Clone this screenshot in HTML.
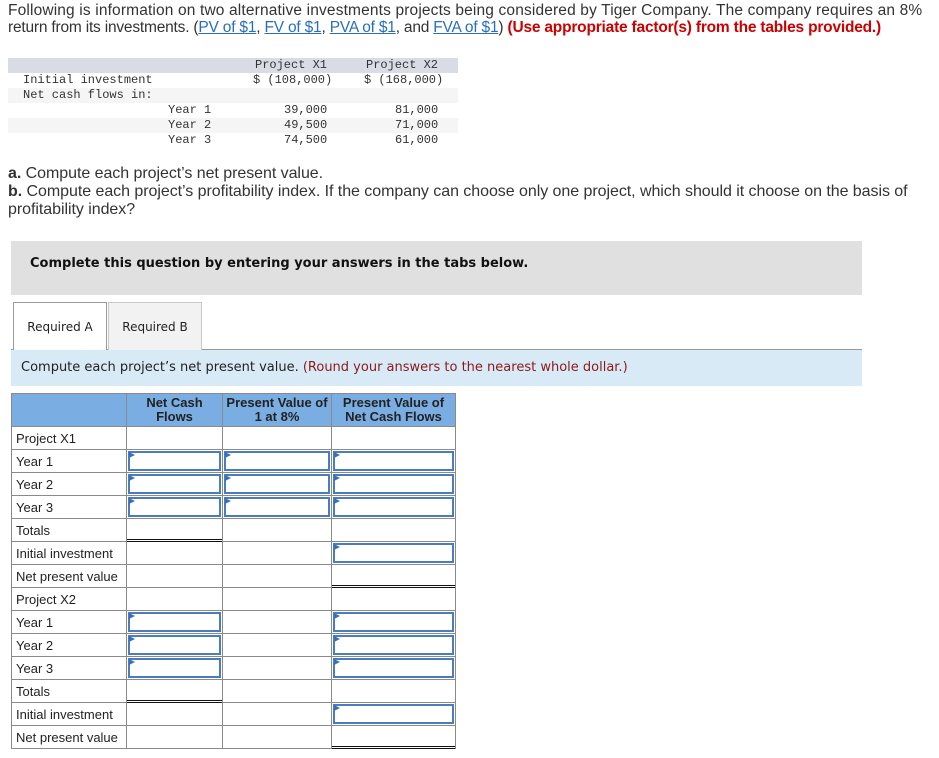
<!DOCTYPE html>
<html><head><meta charset="utf-8"><style>
body{margin:0;width:939px;height:758px;background:#fff;font-family:"Liberation Sans",sans-serif;color:#333;position:relative;overflow:hidden}
.a{position:absolute}
.p{font-size:15.5px;line-height:16px;left:8px;letter-spacing:0.15px;white-space:nowrap}
a{color:#2a6ebb;text-decoration:underline}
.red{color:#c00;font-weight:bold}
.mono{font-family:"Liberation Mono",monospace;font-size:12px;color:#333}
.dt div{position:absolute;white-space:pre}
table{border-collapse:collapse;position:absolute;left:11px;top:393px;table-layout:fixed}
td{border:1px solid #8a8a8a;height:22px;padding:0;font-size:13px;color:#222;position:relative}
td.l{padding-left:4px}
th{background:#7aaee3;border:1px solid #8a8a8a;height:32px;font-size:13px;font-weight:bold;color:#222;line-height:14px;padding:0}
.i{position:absolute;left:1px;top:1px;right:1px;bottom:1px;border:2px solid #4a7cbf}
.i:before{content:"";position:absolute;left:-1px;top:-1px;border-left:6px solid #3d6fb6;border-top:3px solid transparent;border-bottom:3px solid transparent}
.dbl:after{content:"";position:absolute;left:0;right:0;bottom:-1px;height:1px;border-top:1px solid #111;border-bottom:1px solid #111}
.q{font-size:16px;letter-spacing:-0.05px}
</style></head><body>
<div class="a p" style="top:3px">Following is information on two alternative investments projects being considered by Tiger Company. The company requires an 8%</div>
<div class="a p" style="top:20px;letter-spacing:-0.2px">return from its investments. (<a>PV of $1</a>, <a>FV of $1</a>, <a>PVA of $1</a>, and <a>FVA of $1</a>) <span class="red">(Use appropriate factor(s) from the tables provided.)</span></div>

<div class="a" style="left:8px;top:58px;width:450px;height:15px;background:#d9dce5"></div>
<div class="a" style="left:8px;top:88px;width:450px;height:15px;background:#f5f5f5"></div>
<div class="a" style="left:8px;top:118px;width:450px;height:15px;background:#f5f5f5"></div>
<div class="a mono dt" style="left:0;top:0">
<div style="left:23px;top:73px">Initial investment</div>
<div style="left:23px;top:88px">Net cash flows in:</div>
<div style="left:255px;top:58px">Project X1</div>
<div style="left:366px;top:58px">Project X2</div>
<div style="left:253px;top:73px">$ (108,000)</div>
<div style="left:364px;top:73px">$ (168,000)</div>
<div style="left:168px;top:103px">Year 1</div>
<div style="left:168px;top:118px">Year 2</div>
<div style="left:168px;top:133px">Year 3</div>
<div style="left:284px;top:103px">39,000</div>
<div style="left:284px;top:118px">49,500</div>
<div style="left:284px;top:133px">74,500</div>
<div style="left:395px;top:103px">81,000</div>
<div style="left:395px;top:118px">71,000</div>
<div style="left:395px;top:133px">61,000</div>
</div>

<div class="a p q" style="top:166px"><b>a.</b> Compute each project’s net present value.</div>
<div class="a p q" style="top:184px"><b>b.</b> Compute each project’s profitability index. If the company can choose only one project, which should it choose on the basis of</div>
<div class="a p q" style="top:202px">profitability index?</div>

<div class="a" style="left:11px;top:241px;width:851px;height:54px;background:#e0e0e0"></div>
<div class="a" style="left:30px;top:256px;font-family:'DejaVu Sans',sans-serif;font-size:13px;font-weight:bold;color:#111">Complete this question by entering your answers in the tabs below.</div>

<div class="a" style="left:11px;top:349px;width:851px;height:1px;background:#999"></div>
<div class="a" style="left:13px;top:302px;width:92px;height:48px;border:1px solid #999;border-bottom:none;background:#fff;font-family:'DejaVu Sans',sans-serif;font-size:12px;color:#222;text-align:center;line-height:48px">Required A</div>
<div class="a" style="left:108px;top:302px;width:92px;height:47px;border:1px solid #c8c8c8;border-bottom:none;background:#f2f2f2;font-family:'DejaVu Sans',sans-serif;font-size:12px;color:#222;text-align:center;line-height:48px">Required B</div>
<div class="a" style="left:11px;top:350px;width:851px;height:36px;background:#d9eaf7"></div>
<div class="a" style="left:21px;top:360px;font-family:'DejaVu Sans',sans-serif;font-size:13px;color:#222">Compute each project’s net present value. <span style="color:#8b1a1a">(Round your answers to the nearest whole dollar.)</span></div>

<table>
<colgroup><col style="width:115px"><col style="width:96px"><col style="width:109px"><col style="width:124px"></colgroup>
<tr><th></th><th>Net Cash<br>Flows</th><th>Present Value of<br>1 at 8%</th><th>Present Value of<br>Net Cash Flows</th></tr>
<tr><td class="l">Project X1</td><td></td><td></td><td></td></tr>
<tr><td class="l">Year 1</td><td><div class="i"></div></td><td><div class="i"></div></td><td><div class="i"></div></td></tr>
<tr><td class="l">Year 2</td><td><div class="i"></div></td><td><div class="i"></div></td><td><div class="i"></div></td></tr>
<tr><td class="l">Year 3</td><td><div class="i"></div></td><td><div class="i"></div></td><td><div class="i"></div></td></tr>
<tr><td class="l">Totals</td><td class="dbl"></td><td></td><td></td></tr>
<tr><td class="l">Initial investment</td><td></td><td></td><td><div class="i"></div></td></tr>
<tr><td class="l">Net present value</td><td></td><td></td><td class="dbl"></td></tr>
<tr><td class="l">Project X2</td><td></td><td></td><td></td></tr>
<tr><td class="l">Year 1</td><td><div class="i"></div></td><td></td><td><div class="i"></div></td></tr>
<tr><td class="l">Year 2</td><td><div class="i"></div></td><td></td><td><div class="i"></div></td></tr>
<tr><td class="l">Year 3</td><td><div class="i"></div></td><td></td><td><div class="i"></div></td></tr>
<tr><td class="l">Totals</td><td class="dbl"></td><td></td><td></td></tr>
<tr><td class="l">Initial investment</td><td></td><td></td><td><div class="i"></div></td></tr>
<tr><td class="l">Net present value</td><td></td><td></td><td class="dbl"></td></tr>
</table>
</body></html>
